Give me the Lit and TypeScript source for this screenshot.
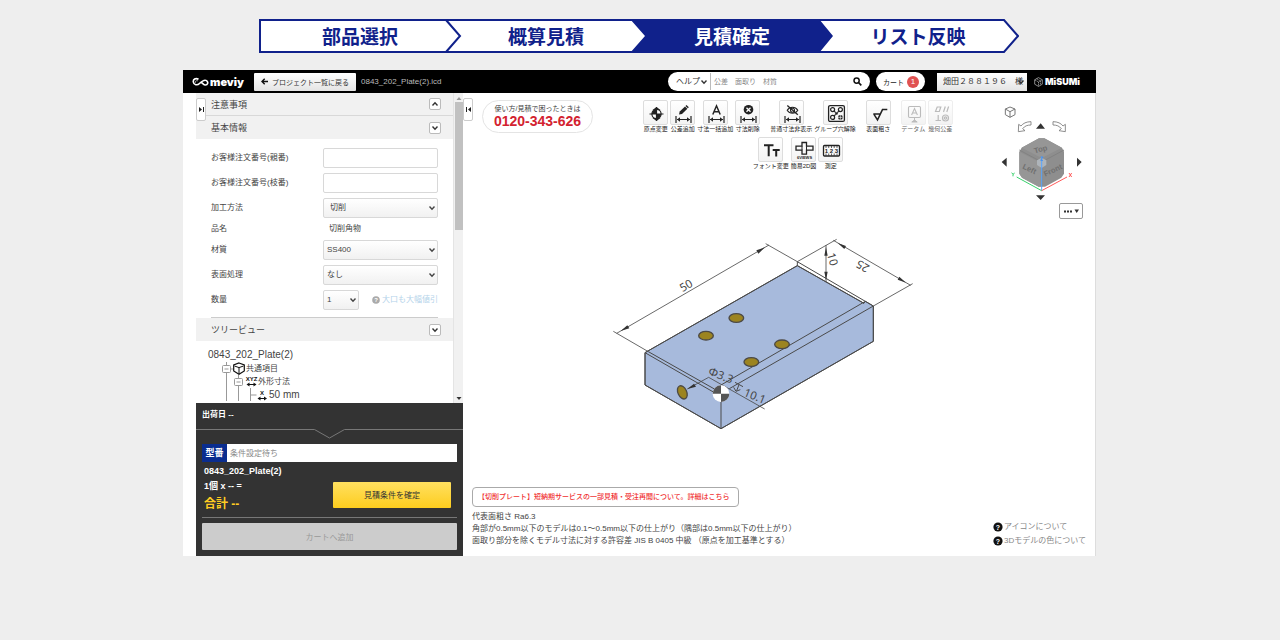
import { LitElement, html, svg, css } from "lit";
import { customElement } from "lit/decorators.js";
import { classMap } from "lit/directives/class-map.js";

const chevron = (cls = "") => html`<svg class="chev ${cls}" viewBox="0 0 8 8" width="8" height="8" aria-hidden="true">
  <path d="M1.5 2.6 4 5.2 6.5 2.6" fill="none" stroke="currentColor" stroke-width="1.4"/></svg>`;

const span = svg`<path d="M5 15v7M20 15v7M6 18.5h13" fill="none" stroke="#222" stroke-width="1.2"/>
  <path d="M6 18.5 9 16.3v4.4zM19 18.5l-3-2.2v4.4z" fill="#222"/>`;

const icons: Record<string, unknown> = {
  origin: svg`<circle cx="12.500" cy="13" r="4.600" fill="#fff" stroke="#222" stroke-width="1.200"/>
    <path d="M12.500 13V8.400A4.600 4.600 0 0 0 7.900 13zM12.500 13v4.600a4.600 4.600 0 0 0 4.600-4.600z" fill="#222"/>
    <path d="M12.500 6v14M5.500 13h14" stroke="#222" stroke-width="1.200"/>
    <path d="M8.500 9 12.500 6l4 3zM8.500 17l4 3 4-3z" fill="#222"/>`,
  pencil: svg`${span}<path d="M8 13.600 8.700 10.600 14 5.400 16.400 7.700 11 13z" fill="#222"/><path d="m14.500 4.900 1-.9 2.300 2.200-1 1z" fill="#222"/>`,
  letter: svg`${span}<path d="M8.800 13.500 12.500 4.800l3.700 8.700M10.200 10.700h4.600" fill="none" stroke="#222" stroke-width="1.500"/>`,
  remove: svg`${span}<circle cx="12.500" cy="8.700" r="4.800" fill="#222"/><path d="m10.500 6.700 4 4m0-4-4 4" stroke="#fff" stroke-width="1.300"/>`,
  hide: svg`${span}<path d="M7.200 9.300c2.600-4 8-4 10.600 0-2.600 4-8 4-10.600 0z" fill="none" stroke="#222" stroke-width="1.100"/>
    <circle cx="12.500" cy="9.300" r="2" fill="none" stroke="#222" stroke-width="1.100"/><path d="m7.300 4.400 10.500 9.300" stroke="#222" stroke-width="1.300"/>`,
  group: svg`<rect x="4.600" y="4.600" width="15.800" height="15.800" rx="1.500" fill="none" stroke="#222" stroke-width="1.300"/>
    <g fill="none" stroke="#222" stroke-width="1.200"><circle cx="8.600" cy="8.600" r="2"/><circle cx="16.400" cy="8.600" r="2"/><circle cx="8.600" cy="16.400" r="2"/>
    <path d="m10.200 10.200 1.500 1.500m1.600 0 1.500-1.500m-4.600 4.600 1.500-1.500"/></g>
    <circle cx="12.500" cy="12.500" r="1.300" fill="#222"/><circle cx="16.400" cy="16.400" r="2.400" fill="#222"/><path d="M16.400 14v4.800M14 16.400h4.800" stroke="#fff" stroke-width=".6"/>`,
  rough: svg`<path d="M6.300 13h7M7 13.300l3.500 5.600L15.500 8.600h4.800" fill="none" stroke="#222" stroke-width="1.500"/>`,
  datum: svg`<rect x="6.500" y="5.500" width="12" height="11" rx="1.200" fill="none" stroke="#bbb" stroke-width="1.100"/>
    <path d="M9.600 14 12.500 7.500l2.900 6.500M10.500 12h4" fill="none" stroke="#bbb" stroke-width="1.100"/><path d="M12.500 16.500v3M9.800 21l2.700-2 2.700 2z" stroke="#bbb" fill="#bbb"/>`,
  geo: svg`<g fill="none" stroke="#bbb" stroke-width="1.200"><path d="M6.500 10.500 8.200 6h3.600l-1.500 4.500zM14.500 11l1.800-5.500M17.800 11l1.800-5.500M6.500 19.500h5.500M9.200 14v5.500"/>
    <circle cx="16.500" cy="17" r="3"/><circle cx="16.500" cy="17" r="1.200"/></g>`,
  font: svg`<path d="M5 7.300h9.500M9.700 7.300v11M13.700 12h7M17.200 12v6.500" fill="none" stroke="#222" stroke-width="2"/>`,
  views: svg`<path d="M10 4.500h4.500v3.700H21v4h-6.500v4H10v-4H4v-4h6z" fill="none" stroke="#222" stroke-width="1.300"/><path d="M10 8.200v4m4.500-4v4" stroke="#222"/>
    <text x="12.500" y="21" font-size="4" font-weight="700" text-anchor="middle" fill="#222">6VIEWS</text>`,
  measure: svg`<rect x="4.500" y="7.500" width="16" height="10.500" rx="1" fill="none" stroke="#222" stroke-width="1.300"/>
    <path d="M7 8v2m2.700-2v2M12.500 8v2m2.700-2v2M18 8v2M7 15.500v2m2.700-2v2m2.800-2v2m2.700-2v2m2.800-2v2" stroke="#222" stroke-width=".7"/>
    <text x="12.500" y="15" font-size="6" font-weight="700" text-anchor="middle" fill="#222">1 2 3</text>`,
};

type Tool = { icon: string; label: string; off?: boolean };
const toolRows: Tool[][][] = [
  [
    [{ icon: "origin", label: "原点変更" }, { icon: "pencil", label: "公差追加" }, { icon: "letter", label: "寸法一括追加" }, { icon: "remove", label: "寸法削除" }],
    [{ icon: "hide", label: "普通寸法非表示" }, { icon: "group", label: "グループ穴解除" }],
    [{ icon: "rough", label: "表面粗さ" }],
    [{ icon: "datum", label: "データム", off: true }, { icon: "geo", label: "幾何公差", off: true }],
  ],
  [[{ icon: "font", label: "フォント変更" }, { icon: "views", label: "簡易2D図" }, { icon: "measure", label: "測定" }]],
];

const base = css`
  :host { display: block; font-family: "Liberation Sans", "Noto Sans CJK JP", sans-serif; }
  * { box-sizing: border-box; }
  svg { display: block; flex: none; }
  button, input, select { font: inherit; color: inherit; margin: 0; padding: 0; border-radius: 0; min-width: 0; }
  input::placeholder { color: #888; opacity: 1; }
  select { appearance: none; outline: 0; }
  a { text-decoration: none; }
  .pick { display: grid; align-items: center; }
  .pick > * { grid-area: 1 / 1; }
  .pick select { width: 100%; height: 100%; }
  .chev { justify-self: end; margin-right: 2px; pointer-events: none; }
`;

@customElement("step-flow")
class StepFlow extends LitElement {
  static styles = [base, css`
    :host { padding-right: 2px; }
    ol { display: grid; grid-template-columns: repeat(4, 1fr); width: 760px; max-width: 100%; height: 34px; margin: 0 auto; padding: 0 8px;
      list-style: none; position: relative; align-items: center; text-align: center; font: 700 19px/32px "Noto Sans CJK JP", sans-serif; color: #10218b; }
    .arrows { position: absolute; inset: 0; width: 100%; height: 100%; }
    li { position: relative; }
    .now { color: #fff; }
  `];
  render() {
    return html`<ol>
      <svg class="arrows" viewBox="0 0 760 34" preserveAspectRatio="none" aria-hidden="true">
        <path d="M1 1h744l14 16-14 16H1z" fill="#fff" stroke="#10218b" stroke-width="2"/>
        <path d="M187 1l14 16-14 16" fill="none" stroke="#10218b" stroke-width="2"/>
        <path d="M371 0h189l14 17-14 17H371l15-17z" fill="#10218b"/>
      </svg>
      ${["部品選択", "概算見積", "見積確定", "リスト反映"].map((t, i) => html`<li class=${classMap({ now: i === 2 })}>${t}</li>`)}
    </ol>`;
  }
}

@customElement("app-header")
class AppHeader extends LitElement {
  static styles = [base, css`
    header { display: flex; align-items: center; height: 23px; padding: 0 16px 0 9px; background: #000; color: #fff; }
    .logo { display: flex; align-items: center; gap: 1px; width: 62px; font: 900 11px/18px Inter, sans-serif; }
    .back { display: flex; align-items: center; gap: 4px; height: 18px; padding: 0 7px; border: 0; border-radius: 1px; background: linear-gradient(#fff, #e4e4e4); color: #333; font-size: 7px; white-space: nowrap; }
    .file { margin-left: 5px; font-size: 8px; color: #bbb; }
    .search { display: flex; align-items: center; width: 202px; height: 19px; margin-left: auto; padding-right: 8px; border-radius: 10px; background: #fff; color: #333; }
    .help { width: 43px; height: 17px; border-right: 1px solid #bbb; font-size: 8px; }
    .help select { border: 0; background: none; padding-left: 8px; }
    .search input { flex: 1; border: 0; outline: 0; padding-left: 3px; background: none; font-size: 7px; }
    .cart { display: flex; align-items: center; gap: 3px; height: 19px; margin-left: 6px; padding: 0 6px 0 7px; border-radius: 10px; background: #fff; color: #222; font-size: 7px; }
    .count { width: 12px; height: 12px; border-radius: 50%; background: #e05252; color: #fff; font-size: 8px; line-height: 12px; text-align: center; }
    .user { width: 90px; height: 18px; margin-left: 12px; font-size: 8px; color: #333; }
    .user select { border: 0; padding-left: 6px; background: linear-gradient(#fff, #e4e4e4); }
    .misumi { display: flex; align-items: center; gap: 2px; margin-left: 7px; font: 900 9px/18px Inter, sans-serif; }
  `];
  render() {
    return html`<header>
      <div class="logo">
        <svg width="17" height="10" viewBox="0 0 17 10" fill="none" stroke="#fff" aria-hidden="true"><path d="M6.500 2.300C3.500.5 1 2.500 1.300 5c.4 3 4 3.700 6.200 1.500C9.500 4.500 12 2 14.500 3.600 16.800 5.200 15.500 8 13.500 8c-1.800 0-2.500-1.500-4-2.500" stroke-width="1.600"/><path d="M5.800 3.800c-2-.5-3 .8-2.400 2" stroke="#aaa"/></svg>
        <span>meviy</span>
      </div>
      <button class="back"><svg width="7" height="7" viewBox="0 0 7 7" aria-hidden="true"><path d="M3.700.8 1 3.500l2.700 2.700M1 3.500h6" fill="none" stroke="#111" stroke-width="1.400"/></svg>プロジェクト一覧に戻る</button>
      <span class="file">0843_202_Plate(2).icd</span>
      <div class="search">
        <span class="pick help"><select aria-label="検索対象"><option>ヘルプ</option></select>${chevron()}</span>
        <input type="search" aria-label="検索" placeholder="公差　面取り　材質">
        <svg width="9" height="9" viewBox="0 0 9 9" aria-hidden="true"><circle cx="3.600" cy="3.600" r="2.600" fill="none" stroke="#111" stroke-width="1.500"/><path d="m5.500 5.500 2.800 2.800" stroke="#111" stroke-width="1.700"/></svg>
      </div>
      <a class="cart" href="#">カート<span class="count">1</span></a>
      <span class="pick user"><select aria-label="ユーザー"><option>畑田２８８１９６　様</option></select>${chevron()}</span>
      <div class="misumi">
        <svg width="9" height="10" viewBox="0 0 9 10" fill="none" stroke="#aaa" stroke-width=".8" aria-hidden="true"><path d="M4.500.6 8.300 2.800v4.400L4.500 9.400.7 7.200V2.800z"/><path d="m.7 2.800 3.800 2.200 3.800-2.200M4.500 5v4.400M2.600 1.700l3.800 2.200v4.300" stroke-dasharray="1.500 .6"/></svg>
        <span>MiSUMi</span>
      </div>
    </header>`;
  }
}

@customElement("side-panel")
class SidePanel extends LitElement {
  static styles = [base, css`
    :host { display: flex; flex-direction: column; color: #444; }
    .scroll { display: flex; height: 310px; background: #fff; }
    .content { flex: 1; min-width: 0; overflow: hidden; }
    h2 { display: flex; align-items: center; justify-content: space-between; height: 23px; margin: 0; padding: 0 12px 0 15px; background: #f1f1f1; font-size: 9px; font-weight: 400; }
    .first { border-bottom: 1px solid #d8d8d8; }
    .fold { display: grid; place-items: center; width: 12px; height: 12px; border: 1px solid #bbb; border-radius: 2px; background: #fff; color: #333; }
    .fold .chev { margin: 0; justify-self: center; }
    .up { transform: rotate(180deg); }
    form { display: grid; gap: 5px; margin: 0 15px; padding: 9px 0 7px; border-bottom: 1px solid #ccc; font-size: 8px; line-height: 12px; }
    .row { display: grid; grid-template-columns: 112px 1fr; align-items: center; }
    .row input, .row select { border: 1px solid #d8d8d8; border-radius: 2px; background: #fff; }
    .row input { height: 20px; width: 100%; }
    .row .pick { height: 20px; }
    .row select { padding-left: 3px; background: linear-gradient(#fff, #f1f1f1); }
    .row .pad select, .plain { padding-left: 6px; }
    .qty { display: grid; grid-template-columns: 36px 1fr; align-items: center; }
    .bulk { display: flex; justify-content: flex-end; align-items: center; gap: 2px; color: #b4d3ea; white-space: nowrap; }
    .tree { padding: 7px 0 0 12px; font-size: 8px; line-height: 13px; }
    .name { font-size: 10px; line-height: 14px; }
    .node { display: flex; align-items: center; height: 13px; }
    .node.mm { font-size: 10px; }
    .bar { display: flex; flex-direction: column; align-items: center; width: 10px; padding: 4px 0 3px; background: #f1f1f1; border-left: 1px solid #e4e4e4; }
    .thumb { width: 8px; height: 128px; margin: 1px 0 auto; background: #c1c1c1; }
    .order { flex: 1; display: flex; flex-direction: column; padding: 0 6px 6px; background: #333; color: #fff; font-weight: 700; }
    .ship { height: 25px; font-size: 8px; line-height: 24px; }
    .notch { margin: 0 -6px; width: calc(100% + 12px); height: 12px; }
    .model { display: flex; height: 18px; margin-top: 4px; }
    .model label { width: 25px; background: #0a2d8f; font-size: 9px; line-height: 18px; text-align: center; }
    .model input { flex: 1; border: 0; background: #fff; padding-left: 3px; font-size: 8px; font-weight: 400; }
    .total { display: flex; justify-content: space-between; padding: 2px 6px 3px 2px; border-bottom: 1px solid #777; font-size: 9px; line-height: 15px; }
    .total p { margin: 0; }
    .total .sum { font-size: 12px; line-height: 20px; color: #fc2; }
    .fix { align-self: flex-end; width: 118px; height: 26px; margin-bottom: 6px; border: 0; border-radius: 1px; background: linear-gradient(#ffe060, #fdcd1e); color: #333; font-size: 8px; font-weight: 400; }
    .add { height: 27px; margin-top: 5px; border: 0; border-radius: 1px; background: #ccc; color: #999; font-size: 8px; font-weight: 400; }
  `];
  select(id: string, label: string, value: string, pad = false) {
    return html`<div class="row"><label for=${id}>${label}</label>
      <span class=${classMap({ pick: true, pad })}><select id=${id}><option>${value}</option></select>${chevron()}</span></div>`;
  }
  render() {
    return html`
      <div class="scroll">
        <div class="content">
          <h2 class="first">注意事項<button class="fold" aria-label="注意事項">${chevron("up")}</button></h2>
          <h2>基本情報<button class="fold" aria-label="基本情報">${chevron()}</button></h2>
          <form>
            <div class="row"><label for="parent">お客様注文番号(親番)</label><input id="parent"></div>
            <div class="row"><label for="branch">お客様注文番号(枝番)</label><input id="branch"></div>
            ${this.select("method", "加工方法", "切削", true)}
            <div class="row"><span>品名</span><span class="plain">切削角物</span></div>
            ${this.select("material", "材質", "SS400")}
            ${this.select("surface", "表面処理", "なし")}
            <div class="row"><label for="count">数量</label><div class="qty">
              <span class="pick"><select id="count"><option>1</option></select>${chevron()}</span>
              <a class="bulk" href="#"><svg width="8" height="8" viewBox="0 0 8 8" aria-hidden="true"><circle cx="4" cy="4" r="3.800" fill="#aaa"/><text x="4" y="6.200" font-size="6" font-weight="700" text-anchor="middle" fill="#fff">?</text></svg>大口も大幅値引</a>
            </div></div>
          </form>
          <h2>ツリービュー<button class="fold" aria-label="ツリービュー">${chevron()}</button></h2>
          <div class="tree">
            <div class="name">0843_202_Plate(2)</div>
            <div class="node"><svg width="38" height="13" viewBox="0 0 38 13" fill="none" stroke="#999" aria-hidden="true"><path d="M18.500 0v3m0 8v2M23 7h2"/><rect x="14.500" y="3.500" width="8" height="7" rx="1"/><path d="M16.500 7h4"/><path d="m31 1 5.300 2v6L31 12.300 25.700 9V3z" stroke="#111" stroke-width="1.200"/><path d="m26.500 4 4.500 1.600L35.500 4M31 5.600V12" stroke="#111"/></svg>共通項目</div>
            <div class="node"><svg width="50" height="13" viewBox="0 0 50 13" fill="none" stroke="#999" aria-hidden="true"><path d="M18.500 0v13M30.500 0v3m0 7v3"/><rect x="26.500" y="3.500" width="8" height="7" rx="1"/><path d="M28.500 7h4"/><text x="43.500" y="6" font-size="6" font-weight="700" text-anchor="middle" fill="#111" stroke="none">XYZ</text><path d="M40 9.500h7" stroke="#111"/><path d="m38.500 9.500 3-2v4zm10 0-3-2v4z" fill="#111" stroke="none"/></svg>外形寸法</div>
            <div class="node mm"><svg width="61" height="13" viewBox="0 0 61 13" fill="none" stroke="#999" aria-hidden="true"><path d="M18.500 0v13M30.500 0v13M42.500 0v13M42.500 7h6"/><text x="54" y="6.500" font-size="6" font-weight="700" text-anchor="middle" fill="#111" stroke="none">X</text><path d="M51 10.500h7" stroke="#111"/><path d="m49.500 10.500 3-2v4zm9.500 0-3-2v4z" fill="#111" stroke="none"/></svg>50 mm</div>
          </div>
        </div>
        <div class="bar" aria-hidden="true">
          <svg width="6" height="4" viewBox="0 0 6 4"><path d="m3 0 2.500 3h-5z" fill="#999"/></svg><div class="thumb"></div>
          <svg width="6" height="4" viewBox="0 0 6 4"><path d="M.5 1h5L3 4z" fill="#333"/></svg>
        </div>
      </div>
      <div class="order">
        <div class="ship">出荷日 --</div>
        <svg class="notch" viewBox="0 0 267 12" preserveAspectRatio="none" fill="none" stroke="#777" aria-hidden="true"><path d="M0 1.500h118.500l15 8.500 15-8.500H267"/></svg>
        <div class="model"><label for="model">型番</label><input id="model" placeholder="条件設定待ち"></div>
        <div class="total">
          <div><p>0843_202_Plate(2)</p><p>1個 x -- =</p><p class="sum">合計 --</p></div>
          <button class="fix">見積条件を確定</button>
        </div>
        <button class="add" disabled>カートへ追加</button>
      </div>`;
  }
}

@customElement("model-viewer")
class ModelViewer extends LitElement {
  static styles = [base, css`
    :host { display: flex; flex-direction: column; background: #fff; color: #444; border-right: 1px solid #ddd; }
    .top { display: flex; padding: 7px 8px 0 19px; }
    .tel { width: 111px; height: 33px; padding: 2px 0 0; border: 1px solid #e4e4e4; border-radius: 17px; text-align: center; font-size: 7px; line-height: 12px; }
    .num { display: block; color: #d3222f; font: 700 14px/13px "Liberation Sans", sans-serif; }
    .tools { flex: 1; display: grid; gap: 4px; align-content: start; padding-left: 8px; }
    .line { display: flex; justify-content: center; gap: 10px; }
    .set { display: flex; gap: 2px; }
    .tool { display: flex; flex-direction: column; align-items: center; gap: 1px; min-width: 25px; padding: 0; border: 0; background: none; font-size: 6px; line-height: 7px; color: #222; white-space: nowrap; }
    .face { width: 25px; height: 25px; border: 1px solid #ddd; border-radius: 2px; background: linear-gradient(#fff, #f3f3f3); display: grid; place-items: center; }
    .off .face { border-color: #eee; }
    .tool.off { color: #666; }
    .nav { display: flex; flex-direction: column; align-items: flex-end; width: 92px; padding-top: 3px; }
    .more { display: flex; align-items: center; justify-content: center; width: 24px; height: 16px; margin: 2px 4px 0 0; border: 1px solid #999; border-radius: 2px; background: #fff; }
    .part { align-self: center; margin-top: 6px; max-width: 100%; }
    .foot { display: flex; justify-content: space-between; align-items: flex-end; margin-top: auto; padding: 0 9px 9px; font-size: 8px; line-height: 12px; }
    .foot p { margin: 0; }
    .alert { display: inline-block; margin-bottom: 4px; padding: 0 8px 0 5px; border: 1px solid #aaa; border-radius: 4px; color: #f03030; font-size: 7px; font-weight: 500; line-height: 18px; }
    .links { display: grid; gap: 2px; color: #888; }
    .links a { display: flex; align-items: center; gap: 1px; color: inherit; }
  `];
  cube() {
    return svg`<svg width="87" height="98" viewBox="60 39 261 294" fill="none" aria-hidden="true">
      <path d="m90 51 15 6v17l-15 8-14-8V57zM76 57l14 8 15-8M90 65v17" stroke="#777" stroke-width="3"/>
      <path d="M153 95c-14 0-24 5-30 13l-7-5-1 22 20-3-7-6c6-8 14-11 25-11zM219 95c14 0 24 5 30 13l7-5v22l-19-3 7-6c-6-8-14-11-25-11z" stroke="#777" stroke-width="2.500"/>
      <path d="m182 100 13 16h-27zM168 316h27l-13 14zM65 216l15-13v27zM305 216l-14-13v27z" fill="#333"/>
      <path d="m177 145 16 0 53 28 6 12v66l-8 12-49 27h-19l-50-27-8-12v-66l7-12z" fill="#8e8e8e"/>
      <path d="m125 173 60 31 60-31-52-28h-16zM118 185l64 33v72h-6l-50-27-8-12z" fill="#969696"/>
      <path d="m118 180 67 36 67-36M185 216v74" stroke="#828282" stroke-width="3"/>
      <path d="m185 203 14 8v14l-14 9-14-9v-14z" fill="#aeb4ba"/>
      <g fill="#707070" font-size="23" font-weight="700" text-anchor="middle"><text transform="translate(184 185) rotate(-15)">Top</text><text transform="translate(145 244) rotate(25)">Left</text><text transform="translate(222 248) rotate(-25)">Front</text></g>
      <path d="M185 302V200" stroke="#5ba8ff" stroke-width="3"/><path d="m110 261 75 41" stroke="#38d16c" stroke-width="3"/><path d="m185 302 76-41" stroke="#ff5a5a" stroke-width="3"/>
      <path d="m95 248 4 5 5-4m-5 4v6" stroke="#38d16c" stroke-width="3"/><path d="m267 249 8 12m0-12-8 12" stroke="#ff5a5a" stroke-width="3"/><path d="M182 201h7l-7 10h7" stroke="#4a90e8" stroke-width="3"/>
    </svg>`;
  }
  part() {
    return svg`<svg class="part" width="359" height="220" viewBox="0 0 1077 660" fill="none" stroke="#4a4a4a" stroke-width="3" role="img" aria-label="0843_202_Plate(2)">
      <path d="m135 383 457-261 200 113 4-6 24 14v106L363 611 135 480z" fill="#a7badc"/>
      <path d="M135 383v97l228 131 457-262V243L388 491M363 530v81M135 383l205 118M145 380l200 113M135 383l457-261 200 113M592 110v12M592 110l228 133M796 229 363 480"/>
      <g stroke-width="2.500"><path d="M40 319 145 380M497 56l95 54M50 325 507 60M592 110 710 43M820 243l118-67M700 46l232 135M678 60v112"/></g>
      <g fill="#333" stroke="none"><path d="m62 318 20-17 6 9zM495 67l-26 9 6 10zM713 54l25 9-5 9zM918 173l-25-9 5-9zM678 66l5 26h-10zM678 166l5-26h-10z"/></g>
      <g fill="#9c8420" stroke="#4d4a45" stroke-width="4"><ellipse cx="409" cy="279" rx="22" ry="13"/><ellipse cx="318" cy="332" rx="22" ry="13"/><ellipse cx="546" cy="358" rx="22" ry="13"/><ellipse cx="454" cy="411" rx="22" ry="13"/><ellipse cx="247" cy="502" rx="13" ry="21" transform="rotate(-25 247 502)"/></g>
      <path d="m262 492 64-35 168 95" stroke-width="2.500"/><path d="m262 492 20-16 6 9z" fill="#333" stroke="none"/>
      <circle cx="363" cy="506" r="25" fill="#fff" stroke="none"/><path d="M363 506v-25a25 25 0 0 0-25 25zM363 506v25a25 25 0 0 0 25-25z" fill="#555" stroke="none"/>
      <g fill="#444" stroke="none" font-size="34" font-family="Noto Sans, sans-serif" text-anchor="middle">
        <text transform="translate(264 192) rotate(-30)">50</text>
        <text transform="translate(794 113) rotate(-150)">25</text>
        <text transform="translate(686 106) rotate(75)">10</text>
        <text transform="translate(358 462) rotate(22)">Φ3.3</text>
        <text transform="translate(460 524) rotate(22)">10.1</text>
      </g>
      <path d="m405 472 24 13M417 479l-7 18m-9-10 7 12 13-5" stroke-width="3"/>
    </svg>`;
  }
  render() {
    const q = svg`<svg width="10" height="10" viewBox="0 0 10 10" aria-hidden="true"><circle cx="5" cy="5" r="4.600" fill="#111"/><text x="5" y="7.600" font-size="7" font-weight="700" text-anchor="middle" fill="#fff">?</text></svg>`;
    return html`
      <div class="top">
        <div class="tel">使い方/見積で困ったときは<span class="num">0120-343-626</span></div>
        <div class="tools">${toolRows.map((r) => html`<div class="line">${r.map((g) => html`<div class="set">${g.map((t) => html`
          <button class=${classMap({ tool: true, off: !!t.off })} ?disabled=${t.off}><span class="face"><svg width="25" height="25" viewBox="0 0 25 25">${icons[t.icon]}</svg></span>${t.label}</button>`)}</div>`)}</div>`)}</div>
        <div class="nav">${this.cube()}
          <button class="more" aria-label="表示メニュー"><svg width="16" height="6" viewBox="0 0 16 6"><path d="M1 2.500h2v2H1zM4 2.500h2v2H4zM7 2.500h2v2H7zM11.500 1.500h4.500L13.700 5z" fill="#333"/></svg></button>
        </div>
      </div>
      ${this.part()}
      <div class="foot">
        <div><a class="alert" href="#">【切削プレート】短納期サービスの一部見積・受注再開について。詳細はこちら</a>
          <p>代表面粗さ Ra6.3</p><p>角部が0.5mm以下のモデルは0.1～0.5mm以下の仕上がり（隅部は0.5mm以下の仕上がり）</p><p>面取り部分を除くモデル寸法に対する許容差 JIS B 0405 中級 （原点を加工基準とする）</p></div>
        <div class="links"><a href="#">${q}アイコンについて</a><a href="#">${q}3Dモデルの色について</a></div>
      </div>`;
  }
}

@customElement("app-root")
class AppRoot extends LitElement {
  static styles = [base, css`
    :host { box-sizing: border-box; min-height: 100vh; padding-top: 19px; background: #eee; }
    .frame { width: 914px; max-width: 100%; margin: 17px auto 0; padding-right: 1px; }
    .body { display: grid; grid-template-columns: 267px 1fr; padding-left: 13px; background: #fff; position: relative; }
    .handle { position: absolute; top: 5px; display: grid; place-items: center; width: 10px; height: 23px; border: 1px solid #ccc; border-radius: 2px; background: #fff; }
    .left { left: 13px; }
    .right { left: 280px; }
  `];
  render() {
    return html`<step-flow></step-flow>
      <div class="frame">
        <app-header></app-header>
        <div class="body">
          <side-panel></side-panel>
          <model-viewer></model-viewer>
          <button class="handle left" aria-label="パネルを開く"><svg width="5" height="5" viewBox="0 0 5 5"><path d="M0 0v5l3-2.500zM4 0h1v5H4z" fill="#222"/></svg></button>
          <button class="handle right" aria-label="パネルを閉じる"><svg width="5" height="5" viewBox="0 0 5 5"><path d="M5 0v5L2 2.500zM0 0h1v5H0z" fill="#222"/></svg></button>
        </div>
      </div>`;
  }
}
